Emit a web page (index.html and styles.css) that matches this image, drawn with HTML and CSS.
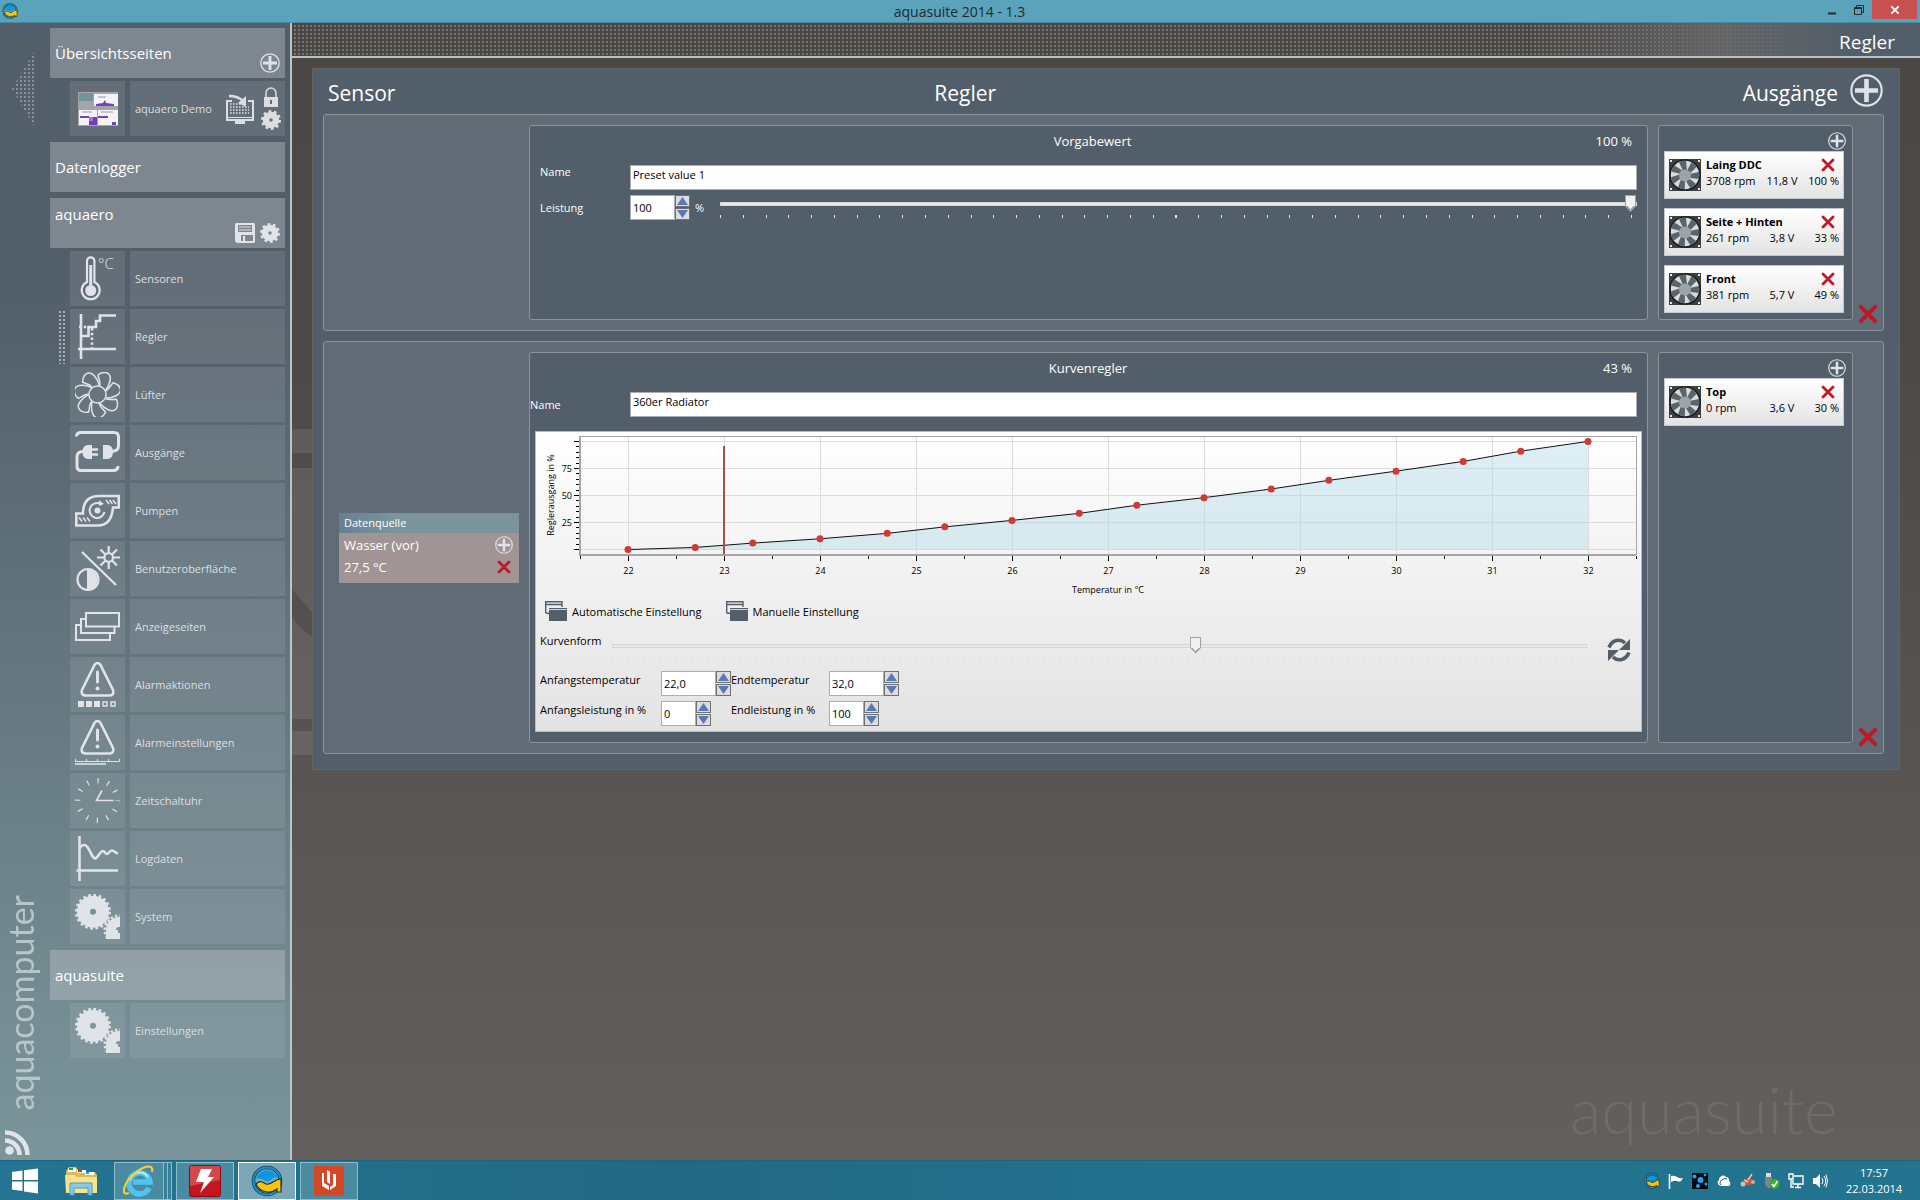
FILE: index.html
```
<!DOCTYPE html>
<html lang="de">
<head>
  <meta charset="UTF-8">
  <meta name="viewport" content="width=device-width, initial-scale=1.0">
  <title>aquasuite 2014 - 1.3</title>
  <link rel="stylesheet" href="styles.css">
</head>
<body>

  <!-- Shared icons -->
  <svg class="sprite" aria-hidden="true">
    <symbol id="i-plus" viewBox="0 0 20 20">
      <circle cx="10" cy="10" r="9.2" fill="none" stroke="currentColor" stroke-width="1.3"/>
      <path d="M10 3v14M3 10h14" stroke="currentColor" stroke-width="2.8"/>
    </symbol>
    <symbol id="i-cross" viewBox="0 0 14 14">
      <path d="M2 2l10 10M12 2L2 12" stroke="#c01828" stroke-width="2.8" stroke-linecap="round"/>
    </symbol>
    <symbol id="i-gear" viewBox="0 0 20 20">
      <circle cx="10" cy="10" r="5" fill="none" stroke="currentColor" stroke-width="6.4"/>
      <circle cx="10" cy="10" r="8.6" fill="none" stroke="currentColor" stroke-width="2.8" stroke-dasharray="2.7 2.7"/>
    </symbol>
    <symbol id="i-save" viewBox="0 0 20 20">
      <path fill="currentColor" fill-rule="evenodd" d="M1 0h18l1 1v18l-1 1H2l-2-2V1zM3 2v7h14V2zM6 12v6h12v-6z"/>
      <path d="M4 4h12M4 7h12" stroke="currentColor"/>
      <rect x="8" y="13" width="2" height="5" fill="currentColor"/>
    </symbol>
    <symbol id="i-lock" viewBox="0 0 14 20">
      <path d="M2 11V6a5 5 0 0 1 10 0v5" fill="none" stroke="currentColor" stroke-width="1.5"/>
      <path fill="currentColor" fill-rule="evenodd" d="M0 10h14v10H0zM6 13v4h2v-4z"/>
    </symbol>
    <symbol id="i-desktop" viewBox="0 0 28 30">
      <path d="M6 7H1v19h26V7h-5" fill="none" stroke="currentColor" stroke-width="2"/>
      <path d="M4 10h15M4 13h19M4 16h19M4 19h19" stroke="currentColor" stroke-width="1.6" stroke-dasharray="1.6 1.4"/>
      <path d="M2 23.5h24" stroke="currentColor"/>
      <path d="M9 27h10v3H9z" fill="currentColor"/>
      <path d="M3 2c6 0 10 1 14 5" fill="none" stroke="currentColor" stroke-width="2.4"/>
      <path d="M20 2v11L12 9z" fill="currentColor"/>
    </symbol>
    <symbol id="i-temp" viewBox="0 0 45 45">
      <path d="M12 26V5a3.7 3.7 0 0 1 7.4 0v21a9 9 0 1 1-7.4 0z" fill="none" stroke="currentColor" stroke-width="2.2"/>
      <circle cx="15.7" cy="34.5" r="5.5" fill="currentColor"/>
      <path d="M15.7 9v22" stroke="currentColor" stroke-width="3"/>
    </symbol>
    <symbol id="i-regler" viewBox="0 0 45 45">
      <g fill="none" stroke="currentColor" stroke-width="2.6">
        <path d="M6 0v45M3 35h38M7 22h6.5v-9H21V7h4V1.5h16"/>
        <path d="M4 13h10M17 14v23" stroke-dasharray="2.4 2.4"/>
      </g>
    </symbol>
    <symbol id="i-fan" viewBox="-22.5 -22.5 45 45">
      <g fill="none" stroke="currentColor" stroke-width="1.5">
        <circle r="8.6"/>
        <path id="blade" d="M-5.5-7C-7-10-11-10.5-15-12.5C-15-17-12.500-21-9-21.500C-5-22-.5-17 2-8.600"/>
        <use href="#blade" transform="rotate(51.43)"/>
        <use href="#blade" transform="rotate(102.86)"/>
        <use href="#blade" transform="rotate(154.29)"/>
        <use href="#blade" transform="rotate(205.71)"/>
        <use href="#blade" transform="rotate(257.14)"/>
        <use href="#blade" transform="rotate(308.57)"/>
      </g>
    </symbol>
    <symbol id="i-plug" viewBox="0 0 45 45">
      <g fill="none" stroke="currentColor" stroke-width="3">
        <path d="M1.5 6.5Q1.5 2.5 6 2.5H39Q43.5 2.5 43.5 7V16Q43.5 21 37 21.5"/>
        <path d="M8 21.5Q2 21.5 2 27V36Q2 40.5 6 40.5H38Q43 40.5 43 36"/>
        <path d="M16 19.5h7M16 24.5h7" stroke-width="2.4"/>
      </g>
      <path fill="currentColor" d="M17 15h-4q-5.5 0-5.5 7t5.5 7h4zM28 15h4q6 0 6 7t-6 7h-4z"/>
    </symbol>
    <symbol id="i-pump" viewBox="0 0 45 45">
      <g fill="none" stroke="currentColor">
        <path stroke-width="2.6" d="M43.7 8H24C14 8 8 13 8 25.5H1.3V37.5H23C33 37.5 37 31 38 19.5h5.7z"/>
        <path stroke-width="2" d="M25 15.5a7.5 7.5 0 1 0 4.5 8.5"/>
        <path stroke-width="1.6" d="M31 12l3 4M34.5 12l3 4M38 12l3 4M4 29.5l3 4M8 29.5l3 4M12 29.5l3 4"/>
      </g>
      <circle cx="22.5" cy="22.5" r="3" fill="currentColor"/>
      <path d="M24 12l5 4-5 2z" fill="currentColor"/>
    </symbol>
    <symbol id="i-display" viewBox="0 0 45 45">
      <g fill="none" stroke="currentColor" stroke-width="2.2">
        <path d="M7 6l34 33"/>
        <circle cx="33.7" cy="11.5" r="4.3"/>
        <path d="M33.7 0v7M33.7 16v7M22 11.5h7M38.5 11.5h7M25.5 3.5l5 5M37 14.5l5 5M42 3.5l-5 5M30.5 14.5l-5 5"/>
        <circle cx="13" cy="33.5" r="10.5"/>
      </g>
      <path fill="currentColor" d="M12 23a10.5 10.5 0 0 1 0 21z"/>
    </symbol>
    <symbol id="i-pages" viewBox="0 0 45 45">
      <path fill="none" stroke="currentColor" stroke-width="2" d="M11 9h33v13.5H11zM10 15H6v14h33.5v-6M5 21H1v15h34v-6"/>
    </symbol>
    <symbol id="i-warn" viewBox="0 0 45 45">
      <path fill="none" stroke="currentColor" stroke-width="2.6" d="M19.5 3Q22.5-1 25.5 3L38 28Q39.5 33.5 34 33.5H11Q5.5 33.5 7 28z"/>
      <path stroke="currentColor" stroke-width="3" stroke-linecap="round" d="M22.5 10v10"/>
      <circle cx="22.5" cy="26.5" r="2" fill="currentColor"/>
    </symbol>
    <symbol id="i-clock" viewBox="-22.5 -22.5 45 45">
      <circle r="19.8" fill="none" stroke="currentColor" stroke-width="5.4" stroke-dasharray="1.2 9.167" stroke-dashoffset="0.6"/>
      <path d="M4.5-10L-1 0H16" fill="none" stroke="currentColor" stroke-width="1.6"/>
    </symbol>
    <symbol id="i-log" viewBox="0 0 45 45">
      <g fill="none" stroke="currentColor" stroke-width="2.6">
        <path d="M4.5 0v45M1.5 34.5H43"/>
        <path d="M5 12C7 8 11 8 13 12C16 16 17 22 20 22.5C23 22 25 15 28 15C30 15 30 18 32 18C34 18 34 14.5 37 14.5C39 14.5 40 17 43 17.5"/>
      </g>
    </symbol>
    <symbol id="i-gears" viewBox="0 0 45 45">
      <circle cx="18" cy="17.8" r="9.5" fill="none" stroke="currentColor" stroke-width="13"/>
      <circle cx="18" cy="17.8" r="16.5" fill="none" stroke="currentColor" stroke-width="3" stroke-dasharray="2.592 2.592"/>
      <circle cx="44" cy="36" r="8" fill="none" stroke="currentColor" stroke-width="10"/>
      <circle cx="44" cy="36" r="14" fill="none" stroke="currentColor" stroke-width="3" stroke-dasharray="2.2 2.2"/>
      <path d="M31 36h12v9H31z" fill="currentColor"/>
    </symbol>
    <symbol id="i-rss" viewBox="0 0 25 25">
      <circle cx="4.5" cy="20.5" r="4.3" fill="currentColor"/>
      <path d="M0 10.5A14.5 14.5 0 0 1 14.5 25M0 2.5A22.5 22.5 0 0 1 22.5 25" fill="none" stroke="currentColor" stroke-width="4.6"/>
    </symbol>
    <symbol id="i-windows" viewBox="0 0 22 20">
      <path d="M.7 12V.7H17V6M.7 12.3H4M.7 3.5H17" fill="none" stroke="#525e69" stroke-width="1.4"/>
      <path d="M4 7h18v13H4z" fill="#525e69"/>
      <path d="M4 8.5h18" stroke="#cfd3d6"/>
    </symbol>
    <symbol id="i-refresh" viewBox="0 0 24 24">
      <path d="M2 9.5C5 2 13 0 18 5M22 14.5C19 22 11 24 6 19" fill="none" stroke="#525e69" stroke-width="3.6"/>
      <path fill="#525e69" d="M23 1v11H12zM1 23V12h11z"/>
    </symbol>
    <symbol id="i-case-fan" viewBox="0 0 32 32">
      <path d="M0 0h32v32H0z" fill="#3d3f40"/>
      <circle cx="16" cy="16" r="15" fill="#d9dcdc" stroke="#1c1d1e" stroke-width="1.6"/>
      <g fill="#59656a">
        <path id="vane" d="M14 12L10 3q4-2 7-1l1 10z"/>
        <use href="#vane" transform="rotate(51.43 16 16)"/>
        <use href="#vane" transform="rotate(102.86 16 16)"/>
        <use href="#vane" transform="rotate(154.29 16 16)"/>
        <use href="#vane" transform="rotate(205.71 16 16)"/>
        <use href="#vane" transform="rotate(257.14 16 16)"/>
        <use href="#vane" transform="rotate(308.57 16 16)"/>
      </g>
      <circle cx="16" cy="16.5" r="6" fill="#9ba5a9"/>
      <path d="M1 1h2v2H1zM29 1h2v2h-2zM1 29h2v2H1zM29 29h2v2h-2z" fill="#e8e8e8"/>
    </symbol>
    <symbol id="i-aqua" viewBox="0 0 32 32">
      <circle cx="16" cy="16" r="13.5" fill="none" stroke="#1c4450" stroke-width="3.6"/>
      <circle cx="16" cy="16" r="13.5" fill="none" stroke="#1a94d8" stroke-width="1.8"/>
      <path d="M5 14A11.5 11.5 0 0 1 27 13C24 11 21 14 18 16C14 17 11 12 5 14z" fill="#0a97e4"/>
      <path d="M5 19C9 15 12 17 15 19C20 21 23 14 30 14V27H26V24C20 29 9 28 5 19z" fill="#ffc400" stroke="#1c3238" stroke-width="1.2"/>
    </symbol>
  </svg>

  <!-- Window title bar -->
  <header class="titlebar">
    <svg class="titlebar-logo"><use href="#i-aqua"/></svg>
    <h1>aquasuite 2014 - 1.3</h1>
    <div class="window-buttons">
      <button type="button" aria-label="Minimieren">
        <svg width="8" height="12" viewBox="0 0 8 12"><path d="M0 9.5h8" stroke="#2a2a2a" stroke-width="2"/></svg>
      </button>
      <button type="button" aria-label="Wiederherstellen">
        <svg width="10" height="10" viewBox="0 0 10 10"><path d="M.5 2.5h7v7h-7zM.5 3.5h7M2.5 2.5v-2h7v7h-2" fill="none" stroke="#2a2a2a"/></svg>
      </button>
      <button type="button" class="close" aria-label="Schließen">
        <svg width="8" height="8" viewBox="0 0 8 8"><path d="M0 0l8 8M8 0L0 8" stroke="#fff" stroke-width="1.8"/></svg>
      </button>
    </div>
  </header>

  <div class="app">
    <aside class="sidebar">
      <div class="rail">
        <button type="button" class="collapse" aria-label="Menü einklappen"></button>
        <div class="brand">aquacomputer</div>
        <a href="#" class="rss" aria-label="RSS"><svg><use href="#i-rss"/></svg></a>
      </div>

      <nav class="nav">
        <section>
          <div class="nav-head">
            <h2>Übersichtsseiten</h2>
            <div class="nav-tools">
              <button type="button" aria-label="Seite hinzufügen"><svg><use href="#i-plus"/></svg></button>
            </div>
          </div>
          <div class="nav-item">
            <span class="nav-icon">
              <svg class="thumb" viewBox="0 0 40 34">
                <path d="M0 0h40v34H0z" fill="#a4a5a8"/>
                <path d="M1 1h14v8H1z" fill="#6f9499"/>
                <path d="M16 2h24v12H16zM1 18h18v15H1zM20 18h20v15H20z" fill="#f4f4f8"/>
                <path d="M18 14v-2l7-1 2-3 1 3 8 1v2zM2 24h9v2H2zM20 24h10v2H20zM34 30h4v3h-4z" fill="#7340c0"/>
                <path d="M11 25h8v8h-8z" fill="#6a3dd0"/>
                <path d="M11 25h4v4h-4z" fill="#b070d0"/>
                <path d="M4 20h10M23 20h12M20 5h8" stroke="#999"/>
              </svg>
            </span>
            <div class="nav-label">
              <a href="#">aquaero Demo</a>
              <button type="button" class="desktop" aria-label="Auf Desktop anzeigen"><svg><use href="#i-desktop"/></svg></button>
              <div class="nav-stack">
                <button type="button" aria-label="Sperren"><svg class="lock"><use href="#i-lock"/></svg></button>
                <button type="button" aria-label="Einstellungen"><svg><use href="#i-gear"/></svg></button>
              </div>
            </div>
          </div>
        </section>

        <section>
          <div class="nav-head"><h2>Datenlogger</h2></div>
        </section>

        <section>
          <div class="nav-head top">
            <h2>aquaero</h2>
            <div class="nav-tools">
              <button type="button" aria-label="Speichern"><svg><use href="#i-save"/></svg></button>
              <button type="button" aria-label="Einstellungen"><svg><use href="#i-gear"/></svg></button>
            </div>
          </div>
          <a href="#" class="nav-item"><span class="nav-icon"><svg viewBox="0 0 45 45" class="temp">
            <use href="#i-temp"/>
            <text x="23" y="13" class="degree">°C</text>
          </svg></span><span class="nav-label">Sensoren</span></a>
          <a href="#" class="nav-item active"><span class="nav-icon"><svg><use href="#i-regler"/></svg></span><span class="nav-label">Regler</span></a>
          <a href="#" class="nav-item"><span class="nav-icon"><svg><use href="#i-fan"/></svg></span><span class="nav-label">Lüfter</span></a>
          <a href="#" class="nav-item"><span class="nav-icon"><svg><use href="#i-plug"/></svg></span><span class="nav-label">Ausgänge</span></a>
          <a href="#" class="nav-item"><span class="nav-icon"><svg><use href="#i-pump"/></svg></span><span class="nav-label">Pumpen</span></a>
          <a href="#" class="nav-item"><span class="nav-icon"><svg><use href="#i-display"/></svg></span><span class="nav-label">Benutzeroberfläche</span></a>
          <a href="#" class="nav-item"><span class="nav-icon"><svg><use href="#i-pages"/></svg></span><span class="nav-label">Anzeigeseiten</span></a>
          <a href="#" class="nav-item"><span class="nav-icon"><svg viewBox="0 0 45 45">
            <use href="#i-warn"/>
            <path d="M3 39h6v6H3zM11 39h6v6h-6zM19 39h6v6h-6z" fill="currentColor"/>
            <path d="M28 40h4v4h-4zM36 40h4v4h-4z" fill="none" stroke="currentColor" stroke-width="1.4"/>
          </svg></span><span class="nav-label">Alarmaktionen</span></a>
          <a href="#" class="nav-item"><span class="nav-icon"><svg viewBox="0 0 45 45">
            <use href="#i-warn"/>
            <path d="M.5 39v2.5h44V39M11.5 39v2M22.5 39v2M33.5 39v2" fill="none" stroke="currentColor"/>
            <path d="M0 44h31" stroke="currentColor" stroke-width="1.6"/>
          </svg></span><span class="nav-label">Alarmeinstellungen</span></a>
          <a href="#" class="nav-item"><span class="nav-icon"><svg><use href="#i-clock"/></svg></span><span class="nav-label">Zeitschaltuhr</span></a>
          <a href="#" class="nav-item"><span class="nav-icon"><svg><use href="#i-log"/></svg></span><span class="nav-label">Logdaten</span></a>
          <a href="#" class="nav-item"><span class="nav-icon"><svg><use href="#i-gears"/></svg></span><span class="nav-label">System</span></a>
        </section>

        <section>
          <div class="nav-head"><h2>aquasuite</h2></div>
          <a href="#" class="nav-item"><span class="nav-icon"><svg><use href="#i-gears"/></svg></span><span class="nav-label">Einstellungen</span></a>
        </section>
      </nav>
    </aside>

    <main class="content">
      <div class="page-head"><h2>Regler</h2></div>

      <svg class="backdrop" viewBox="0 0 20 330" aria-hidden="true">
        <path d="M0 0h20v24H0zM0 39h20v144L0 160zM0 188q8 12 20 20v82H0zM0 302h20v24H0z" fill="#fff" opacity=".09"/>
      </svg>

      <div class="panel">
        <div class="panel-head">
          <h3>Sensor</h3>
          <h3>Regler</h3>
          <div class="panel-add">
            <h3>Ausgänge</h3>
            <button type="button" aria-label="Regler hinzufügen"><svg><use href="#i-plus"/></svg></button>
          </div>
        </div>

        <!-- Preset value -->
        <section class="controller">
          <div class="source-cell"></div>
          <div class="box preset">
            <div class="box-head"><h4>Vorgabewert</h4><output>100 %</output></div>
            <div class="form-row name-row">
              <label for="presetName">Name</label>
              <input type="text" id="presetName" class="name-input" value="Preset value 1">
            </div>
            <div class="form-row">
              <label for="presetPower">Leistung</label>
              <div class="spinner">
                <input type="text" id="presetPower" class="short" value="100">
                <div class="spin-buttons"><button type="button" class="up" aria-label="Mehr"></button><button type="button" class="down" aria-label="Weniger"></button></div>
              </div>
              <span class="unit">%</span>
              <div class="slider">
                <input type="range" min="0" max="100" value="100" aria-label="Leistung">
                <div class="ticks"></div>
              </div>
            </div>
          </div>
          <div class="box outputs">
            <button type="button" class="add" aria-label="Ausgang hinzufügen"><svg><use href="#i-plus"/></svg></button>
            <div class="output">
              <svg class="fan"><use href="#i-case-fan"/></svg>
              <div class="output-info">
                <b>Laing DDC</b>
                <button type="button" aria-label="Laing DDC entfernen"><svg><use href="#i-cross"/></svg></button>
                <div class="values"><span>3708 rpm</span><span>11,8 V</span><span>100 %</span></div>
              </div>
            </div>
            <div class="output">
              <svg class="fan"><use href="#i-case-fan"/></svg>
              <div class="output-info">
                <b>Seite + Hinten</b>
                <button type="button" aria-label="Seite + Hinten entfernen"><svg><use href="#i-cross"/></svg></button>
                <div class="values"><span>261 rpm</span><span>3,8 V</span><span>33 %</span></div>
              </div>
            </div>
            <div class="output">
              <svg class="fan"><use href="#i-case-fan"/></svg>
              <div class="output-info">
                <b>Front</b>
                <button type="button" aria-label="Front entfernen"><svg><use href="#i-cross"/></svg></button>
                <div class="values"><span>381 rpm</span><span>5,7 V</span><span>49 %</span></div>
              </div>
            </div>
          </div>
          <button type="button" class="remove" aria-label="Regler entfernen"><svg><use href="#i-cross"/></svg></button>
        </section>

        <!-- Curve controller -->
        <section class="controller">
          <div class="source-cell">
            <div class="source">
              <div class="source-head">Datenquelle</div>
              <div class="source-row"><span>Wasser (vor)</span>
                <button type="button" aria-label="Datenquelle wählen"><svg><use href="#i-plus"/></svg></button></div>
              <div class="source-row"><span>27,5 °C</span>
                <button type="button" class="small" aria-label="Datenquelle entfernen"><svg><use href="#i-cross"/></svg></button></div>
            </div>
          </div>
          <div class="box curve">
            <div class="box-head"><h4>Kurvenregler</h4><output>43 %</output></div>
            <div class="form-row">
              <label for="curveName">Name</label>
              <input type="text" id="curveName" class="name-input" value="360er Radiator">
            </div>

            <div class="card">
              <svg class="chart" id="curveChart" role="img" aria-label="Reglerausgang über Temperatur"></svg>
              <div class="card-actions">
                <button type="button"><svg><use href="#i-windows"/></svg>Automatische Einstellung</button>
                <button type="button"><svg><use href="#i-windows"/></svg>Manuelle Einstellung</button>
              </div>
              <div class="shape-row">
                <label for="curveShape">Kurvenform</label>
                <div class="slider light">
                  <input type="range" id="curveShape" min="0" max="100" value="60">
                  <div class="ticks"></div>
                </div>
                <button type="button" class="refresh" aria-label="Zurücksetzen"><svg><use href="#i-refresh"/></svg></button>
              </div>
              <div class="fields">
                <label for="tStart">Anfangstemperatur</label>
                <div class="spinner">
                  <input type="text" id="tStart" value="22,0">
                  <div class="spin-buttons"><button type="button" class="up" aria-label="Mehr"></button><button type="button" class="down" aria-label="Weniger"></button></div>
                </div>
                <label for="tEnd">Endtemperatur</label>
                <div class="spinner">
                  <input type="text" id="tEnd" value="32,0">
                  <div class="spin-buttons"><button type="button" class="up" aria-label="Mehr"></button><button type="button" class="down" aria-label="Weniger"></button></div>
                </div>
                <label for="pStart">Anfangsleistung in %</label>
                <div class="spinner">
                  <input type="text" id="pStart" class="tiny" value="0">
                  <div class="spin-buttons"><button type="button" class="up" aria-label="Mehr"></button><button type="button" class="down" aria-label="Weniger"></button></div>
                </div>
                <label for="pEnd">Endleistung in %</label>
                <div class="spinner">
                  <input type="text" id="pEnd" class="tiny" value="100">
                  <div class="spin-buttons"><button type="button" class="up" aria-label="Mehr"></button><button type="button" class="down" aria-label="Weniger"></button></div>
                </div>
              </div>
            </div>
          </div>
          <div class="box outputs">
            <button type="button" class="add" aria-label="Ausgang hinzufügen"><svg><use href="#i-plus"/></svg></button>
            <div class="output">
              <svg class="fan"><use href="#i-case-fan"/></svg>
              <div class="output-info">
                <b>Top</b>
                <button type="button" aria-label="Top entfernen"><svg><use href="#i-cross"/></svg></button>
                <div class="values"><span>0 rpm</span><span>3,6 V</span><span>30 %</span></div>
              </div>
            </div>
          </div>
          <button type="button" class="remove" aria-label="Regler entfernen"><svg><use href="#i-cross"/></svg></button>
        </section>
      </div>

      <div class="watermark">aquasuite</div>
    </main>
  </div>

  <!-- Windows taskbar -->
  <footer class="taskbar">
    <button type="button" class="start" aria-label="Start">
      <svg width="28" height="26" viewBox="0 0 28 26"><path d="M1 4l10.5-1.5V12H1zM13 2.3L27 .5V12H13zM1 13.5h10.5V23L1 21.5zM13 13.5h14V25.5L13 23.5z" fill="#fff"/></svg>
    </button>
    <button type="button" class="plain" aria-label="Explorer">
      <svg width="32" height="30" viewBox="0 0 32 30">
        <path d="M1 5l3-4h7l2 3h6l2 2h9l2 3v17H1z" fill="#d9bb57"/>
        <path d="M3 2h8v4H3zM12 4h9v3h-9zM20 6h9v3h-9z" fill="#fff"/>
        <path d="M4 2h4v2H4z" fill="#19a82e"/><path d="M13 4h4v2h-4z" fill="#d0391e"/><path d="M21 6h3v2h-3z" fill="#2aa0de"/>
        <path d="M0 9h10l1 2h21v16H1z" fill="#f6e38c"/>
        <path d="M5 29V17h22v12h-4v-7H9v7z" fill="#8cc7e6" stroke="#4b9cc6"/>
      </svg>
    </button>
    <div class="stacked">
      <button type="button" class="task ie" aria-label="Internet Explorer">
        <svg width="32" height="32" viewBox="0 0 32 32">
          <path d="M26 23A10.5 10.5 0 1 1 27 17H10" fill="none" stroke="#4fc3f2" stroke-width="5.5"/>
          <path d="M7 15A10 10 0 0 1 25 12" fill="none" stroke="#b9ecff" stroke-width="2"/>
          <path d="M6 28C-4 32 2 16 11 9C20 1 31-2 29 7" fill="none" stroke="#f5cf2a" stroke-width="2.2"/>
        </svg>
      </button>
      <i></i><i></i>
    </div>
    <button type="button" class="task" aria-label="Flash">
      <svg width="32" height="32" viewBox="0 0 32 32">
        <rect x=".5" y=".5" width="31" height="31" rx="2" fill="#c4161c" stroke="#8a0d10"/>
        <path d="M1 1h30v14L1 21z" fill="#fff" opacity=".22"/>
        <path d="M12 4h11l-4 8h6L11 28l4-11H7z" fill="#fff"/>
      </svg>
    </button>
    <button type="button" class="task current" aria-label="aquasuite"><svg width="32" height="32"><use href="#i-aqua"/></svg></button>
    <button type="button" class="task" aria-label="Reader">
      <svg width="30" height="30" viewBox="0 0 30 30">
        <path d="M0 0h30v30H0z" fill="#d24726"/>
        <path d="M8 7h2v10l5 3v4l-7-4zM22 8h-3v11l-3 2v3l6-4zM13 4l3 2v12l-3-2z" fill="#fff"/>
      </svg>
    </button>
    <div class="tray">
      <svg viewBox="0 0 32 32"><use href="#i-aqua"/></svg>
      <svg viewBox="0 0 16 16"><path d="M1.5 1v15" stroke="#fff" stroke-width="1.6"/><path d="M3 3q3-1 6 1t6 1q-1 2-2 3-2 1-4 0T3 9z" fill="#fff"/></svg>
      <svg viewBox="0 0 16 16"><path d="M0 0h16v16H0z" fill="#05090d"/><g fill="#27a3ee"><circle cx="8.5" cy="7" r="3"/><circle cx="2.5" cy="3.5" r="2"/><circle cx="13" cy="2" r="1.4"/><circle cx="6" cy="13" r="2"/><circle cx="14" cy="11" r="1.5"/></g></svg>
      <svg viewBox="0 0 16 16"><path d="M3 12a3 3 0 0 1 0-5 4 4 0 0 1 7-3A3.5 3.5 0 0 1 13 8a3 3 0 0 1 0 5H6a3 3 0 0 1-3-1z" fill="#fff"/><path d="M5 12a3 3 0 0 1 1-5 4 4 0 0 1 5-1" fill="none" stroke="#24586b"/></svg>
      <svg viewBox="0 0 16 16"><path d="M4 10l3-5h4l2 4-4 4z" fill="#e04a36"/><circle cx="3" cy="11" r="2.5" fill="#c8c2c0"/><circle cx="13" cy="9" r="2" fill="#b9b4b2"/><path d="M8 7l4-6M4 7l4 2" stroke="#d8d0cc" stroke-width="1.4"/></svg>
      <svg viewBox="0 0 16 16"><path d="M2 0h5v4H2z" fill="#ddd"/><path d="M1 4h7v8l-3 4-4-4z" fill="#7d8488"/><circle cx="10.5" cy="11" r="5" fill="#3fae2a"/><path d="M8 11l2 2.5L13.5 8" fill="none" stroke="#fff" stroke-width="1.6"/></svg>
      <svg viewBox="0 0 16 16"><path d="M6 3h9v8H5V7M10 11v3M7 14.5h6M1 1h4v5H1zM3 6v8h3" fill="none" stroke="#fff" stroke-width="1.4"/></svg>
      <svg viewBox="0 0 16 16"><path d="M1 5h3l4-4v14l-4-4H1z" fill="#fff"/><path d="M10 5q2 3 0 6M12 3q3.5 5 0 10M14 1.5q3 6.5 0 13" fill="none" stroke="#fff"/></svg>
    </div>
    <div class="clock"><time>17:57</time><time>22.03.2014</time></div>
  </footer>

  <script src="chart.js"></script>
</body>
</html>
```
FILE: styles.css
```
* {
  box-sizing: border-box;
}
body {
  display: flex;
  flex-direction: column;
  min-height: 100vh;
  margin: 0;
  font-family: "Open Sans", "Noto Sans", sans-serif;
  font-size: 11px;
  color: #ffffff;
  background-color: #4d4947;
}
h1, h2, h3, h4 {
  margin: 0;
  font-weight: normal;
}
a {
  color: inherit;
  text-decoration: none;
}
button {
  display: block;
  padding: 0;
  border: none;
  background: none;
  color: inherit;
  font: inherit;
  cursor: pointer;
}
svg {
  display: block;
}
.sprite {
  display: none;
}

/* Title bar */
.titlebar {
  display: grid;
  grid-template-columns: 1fr auto 1fr;
  height: 23px;
  padding: 0 3px 0 2px;
  background-color: #5ba3bb;
  border-bottom: 1px solid #4689a0;
  color: #1c2b30;
}
.titlebar-logo {
  width: 16px;
  height: 16px;
  margin-top: 3px;
}
.titlebar h1 {
  font-size: 14px;
  line-height: 24px;
}
.window-buttons {
  display: flex;
  justify-content: flex-end;
}
.window-buttons button {
  display: flex;
  justify-content: center;
  align-items: center;
  width: 27px;
  height: 19px;
}
.window-buttons .close {
  width: 45px;
  background-color: #c75050;
}

.app {
  flex: 1;
  display: flex;
}

/* Sidebar */
.sidebar {
  display: flex;
  padding-right: 5px;
  border-right: 2px solid #b9c5c8;
  background: linear-gradient(#525e69 0%, #525e69 22%, #7b959b 100%);
}
.rail {
  display: flex;
  flex-direction: column;
  align-items: center;
  width: 50px;
}
.collapse {
  width: 22px;
  height: 74px;
  margin-top: 29px;
  margin-right: 4px;
  background-image: conic-gradient(at 2px 2px, transparent 270deg, #88919a 0);
  background-size: 4px 4px;
  clip-path: polygon(100% 0, 100% 100%, 0 50%);
}
.brand {
  margin-top: auto;
  margin-right: 8px;
  writing-mode: vertical-rl;
  transform: rotate(180deg);
  font-family: Lato, "Open Sans", sans-serif;
  font-size: 34px;
  line-height: 40px;
  color: #b9c6c9;
}
.rss {
  align-self: flex-start;
  margin: 20px 0 5px 5px;
  color: #e0e3e8;
}
.rss svg {
  width: 25px;
  height: 25px;
}
.nav {
  width: 235px;
  padding-top: 5px;
}
.nav section {
  margin-bottom: 6px;
}
.nav-head {
  position: relative;
  display: flex;
  align-items: center;
  height: 50px;
  padding: 0 5px;
  background-color: rgba(200, 199, 205, 0.38);
}
.nav-head.top {
  align-items: flex-start;
  padding-top: 6px;
}
.nav-head h2 {
  font-size: 15px;
  line-height: 20px;
}
.nav-tools {
  position: absolute;
  right: 5px;
  bottom: 5px;
  display: flex;
  gap: 5px;
  color: #e0e3e8;
}
.nav-tools svg, .nav-stack svg {
  width: 20px;
  height: 20px;
}
.nav-item {
  position: relative;
  display: flex;
  gap: 5px;
  height: 55px;
  margin-top: 3px;
  padding-left: 20px;
  color: #dcdfe2;
}
.nav-item.active::before {
  content: "";
  position: absolute;
  left: 9px;
  top: 2px;
  width: 6px;
  height: 53px;
  background-image: conic-gradient(at 2px 2px, transparent 270deg, #a9b1b8 0);
  background-size: 4px 4px;
}
.nav-icon, .nav-label {
  display: flex;
  align-items: center;
  background-color: rgba(200, 199, 205, 0.15);
}
.nav-icon {
  justify-content: center;
  width: 55px;
  color: #e0e3e8;
}
.nav-icon svg {
  width: 45px;
  height: 45px;
}
.nav-icon .thumb {
  width: 40px;
  height: 34px;
}
.nav-icon .temp {
  overflow: visible;
}
.degree {
  font-size: 15px;
  font-weight: 300;
  fill: currentColor;
}
.nav-label {
  flex: 1;
  padding: 0 4px 0 5px;
}
.nav-label .desktop {
  margin-left: auto;
}
.desktop svg {
  width: 28px;
  height: 30px;
}
.nav-stack {
  display: flex;
  flex-direction: column;
  align-items: center;
  gap: 3px;
  margin-left: 7px;
}
.nav-stack .lock {
  width: 14px;
}

/* Main area */
.content {
  position: relative;
  flex: 1;
  background: linear-gradient(#4b4744 0%, #4d4947 30%, #635f5d 100%);
}
.page-head {
  position: relative;
  height: 35px;
  border-bottom: 2px solid #b9c5c8;
  background: linear-gradient(90deg, transparent 76%, #626466 88%, #525e69 96%);
}
.page-head::before {
  content: "";
  position: absolute;
  inset: 2px 0 0 2px;
  background-image: conic-gradient(at 2px 2px, transparent 270deg, #777574 0);
  background-size: 4px 4px;
  -webkit-mask-image: linear-gradient(90deg, #000 80%, transparent 95%);
  mask-image: linear-gradient(90deg, #000 80%, transparent 95%);
}
.page-head h2 {
  padding: 6px 25px 0 0;
  text-align: right;
  font-size: 19px;
  line-height: 26px;
}
.backdrop {
  position: absolute;
  left: 0;
  top: 406px;
  width: 20px;
  height: 330px;
}
.panel {
  position: relative;
  margin: 10px 20px 0;
  padding: 0 15px 15px 10px;
  border: 1px solid #666462;
  background-color: #525e69;
}
.panel-head {
  display: grid;
  grid-template-columns: 3fr 4fr auto;
  align-items: center;
  height: 45px;
  padding-left: 5px;
}
.panel-head h3 {
  padding-top: 2px;
  font-size: 21px;
  line-height: 28px;
}
.panel-add {
  display: flex;
  align-items: center;
  gap: 12px;
}
.panel-add svg {
  width: 33px;
  height: 33px;
  margin: 0 1px 2px 0;
  color: #dfe3e8;
}
.controller {
  display: flex;
  padding: 10px 5px 10px 0;
  border: 1px solid #8b949b;
  border-radius: 3px;
  background-color: #616b75;
}
.controller + .controller {
  margin-top: 10px;
}
.source-cell {
  display: flex;
  align-items: center;
  width: 205px;
  padding: 0 10px 0 15px;
}
.box {
  min-height: 195px;
  border: 1px solid #8b949b;
  border-radius: 3px;
  background-color: #525e69;
}

/* Data source */
.source {
  flex: 1;
  height: 70px;
  background-color: #a09594;
}
.source-head {
  padding: 0 5px;
  line-height: 20px;
  background: linear-gradient(90deg, #667f95, #7a949a 30%);
}
.source-row {
  display: flex;
  justify-content: space-between;
  align-items: center;
  height: 22px;
  padding: 2px 6px 0 5px;
  font-size: 13px;
}
.source-row svg {
  width: 18px;
  height: 18px;
  color: #dfe3e8;
}
.source-row .small svg {
  width: 14px;
  height: 14px;
  margin-right: 2px;
}

/* Controller settings */
.preset, .curve {
  flex: 1;
}
.preset {
  padding: 5px 10px 0;
}
.curve {
  padding: 5px 5px 10px 0;
}
.box-head {
  position: relative;
  margin-bottom: 14px;
  padding-left: 8px;
  text-align: center;
  font-size: 13px;
  line-height: 20px;
}
.curve .box-head {
  padding-left: 4px;
}
.box-head h4 {
  font-size: 13px;
}
.box-head output {
  position: absolute;
  right: 5px;
  top: 0;
}
.curve .box-head output {
  right: 10px;
}
.form-row {
  display: flex;
  align-items: center;
  margin-bottom: 5px;
}
.form-row label {
  width: 90px;
  line-height: 14px;
}
.curve .form-row label {
  width: 100px;
}
.curve .form-row {
  margin-bottom: 14px;
  padding-right: 5px;
}
.name-row label {
  align-self: flex-start;
}
input[type="text"] {
  height: 25px;
  padding: 0 2px;
  border: 1px solid #abadb3;
  border-radius: 0;
  background-color: #ffffff;
  font: inherit;
  color: #000000;
}
input.name-input {
  flex: 1;
  padding-bottom: 6px;
}
.spinner {
  display: flex;
}
.spinner input {
  width: 55px;
}
.spinner .short {
  width: 45px;
}
.spinner .tiny {
  width: 35px;
}
.spin-buttons {
  display: flex;
  flex-direction: column;
  gap: 1px;
}
.spin-buttons button {
  display: flex;
  justify-content: center;
  align-items: center;
  width: 15px;
  height: 12px;
  border: 1px solid #707070;
  background-color: #dddddd;
}
.spin-buttons button::before {
  content: "";
  width: 11px;
  height: 8px;
  background-color: #5878b6;
  clip-path: polygon(50% 0, 100% 100%, 0 100%);
}
.spin-buttons .down::before {
  transform: rotate(180deg);
}
.unit {
  width: 30px;
  padding-left: 5px;
}
.slider {
  flex: 1;
  height: 25px;
}
.slider input {
  display: block;
  width: 100%;
  height: 17px;
  margin: 0;
  appearance: none;
  background: none;
}
.slider input::-webkit-slider-runnable-track {
  height: 4px;
  border: 1px solid #d6d9da;
  background-color: #e7eaea;
}
/* Pentagon thumb, the two gradients outline its tip */
.slider input::-webkit-slider-thumb {
  appearance: none;
  width: 11px;
  height: 17px;
  margin-top: -8px;
  border: solid #9da1a3;
  border-width: 1px 1px 0;
  background:
    linear-gradient(45deg, #9da1a3 66%, transparent 67%) left bottom / 5px 6px no-repeat,
    linear-gradient(315deg, #9da1a3 66%, transparent 67%) right bottom / 5px 6px no-repeat,
    #f0f0f0;
  clip-path: polygon(0 0, 100% 0, 100% 66%, 50% 100%, 0 66%);
}
.slider .ticks {
  height: 3px;
  margin: 3px 5px 0 0;
  border-right: 1px solid #e3e6e8;
  background: repeating-linear-gradient(90deg, #e3e6e8 0 1px, transparent 1px 2.5%);
}
.slider.light input::-webkit-slider-runnable-track {
  border-color: #d2d6d6;
}
.slider.light .ticks {
  margin-right: 0;
  border-color: #dcdfdf;
  background: repeating-linear-gradient(90deg, #dcdfdf 0 1px, transparent 1px 16px);
}

/* Curve card */
.card {
  margin-left: 5px;
  height: 301px;
  border: 1px solid #b4bcc0;
  background: linear-gradient(#ffffff, #e3e3e3);
  color: #000000;
}
.chart {
  width: 100%;
  height: 166px;
  font-size: 9px;
}
.chart .grid {
  stroke: #dcdcdc;
}
.chart .frame {
  stroke: #a5a5a5;
}
.chart .axis {
  stroke: #a5a5a5;
  stroke-width: 2;
}
.chart .tick {
  stroke: #000000;
}
.chart .area {
  fill: #add8e6;
  fill-opacity: 0.4;
}
.chart .line {
  fill: none;
  stroke: #111111;
}
.chart .marker {
  stroke: #a94c4c;
  stroke-width: 2;
}
.chart circle {
  fill: #cf3a36;
}
.card-actions {
  display: flex;
  gap: 24px;
  margin: 3px 0 13px;
  padding-left: 9px;
}
.card-actions button {
  display: flex;
  align-items: center;
  gap: 5px;
  height: 20px;
}
.card-actions svg {
  width: 22px;
  height: 20px;
}
.shape-row {
  display: flex;
  margin-bottom: 9px;
  padding: 0 10px 0 4px;
}
.shape-row label {
  width: 72px;
  line-height: 14px;
}
.shape-row .slider {
  margin-top: 3px;
}
.refresh {
  margin: 4px 0 0 20px;
}
.refresh svg {
  width: 24px;
  height: 24px;
}
.fields {
  display: grid;
  grid-template-columns: 121px 70px 98px auto;
  justify-content: start;
  row-gap: 5px;
  padding-left: 4px;
}
.fields label {
  line-height: 18px;
}

/* Outputs */
.outputs {
  display: flex;
  flex-direction: column;
  gap: 9px;
  width: 195px;
  margin-left: 10px;
  padding: 6px 8px 5px 5px;
}
.outputs .add {
  align-self: flex-end;
  margin: 0 -2px -8px 0;
  color: #dfe3e8;
}
.outputs .add svg {
  width: 18px;
  height: 18px;
}
.output {
  display: flex;
  gap: 5px;
  height: 48px;
  padding: 7px 4px 0;
  border: 1px solid #c3c9cc;
  background: linear-gradient(#ffffff, #e3e3e3);
  color: #000000;
}
.fan {
  width: 32px;
  height: 32px;
}
.output-info {
  flex: 1;
  display: grid;
  grid-template-columns: 1fr auto;
  align-content: start;
  margin-top: -2px;
  line-height: 16px;
}
.output-info button {
  margin: -1px 4px 0 0;
}
.output-info svg {
  width: 14px;
  height: 14px;
}
.values {
  grid-column: 1 / 3;
  display: grid;
  grid-template-columns: 58px 36px 1fr;
  white-space: nowrap;
}
.values span:nth-child(2) {
  text-align: center;
}
.values span:nth-child(3) {
  text-align: right;
}
.remove {
  align-self: flex-end;
  margin-left: 5px;
  margin-bottom: -4px;
}
.remove svg {
  width: 20px;
  height: 20px;
}
.watermark {
  position: absolute;
  right: 82px;
  bottom: 12px;
  font-family: Lato, "Open Sans", sans-serif;
  font-size: 65px;
  font-weight: 300;
  line-height: 78px;
  color: #6e6b69;
}

/* Taskbar */
.taskbar {
  display: flex;
  align-items: center;
  height: 40px;
  border-top: 1px solid #1c6480;
  background: linear-gradient(90deg, #237592, #226883 35%, #22718e 60%, #23748f);
}
.start {
  margin-left: 11px;
}
.plain {
  margin: 0 17px 0 26px;
}
.task {
  display: flex;
  justify-content: center;
  align-items: center;
  width: 58px;
  height: 38px;
  margin-right: 4px;
  border: 1px solid #8fbccb;
  background-color: #4a8ba2;
}
.task.current {
  border-color: #ffffff;
  background-color: #7ba8b8;
}
.stacked {
  display: flex;
  margin-right: 4px;
}
.stacked .task {
  width: 50px;
  margin-right: 0;
}
.stacked i {
  width: 4px;
  border: 1px solid #8fbccb;
  border-left: none;
  background-color: #3a7f98;
}
.tray {
  display: flex;
  gap: 8px;
  margin-left: auto;
}
.tray svg {
  width: 16px;
  height: 16px;
}
.clock {
  display: flex;
  flex-direction: column;
  align-items: center;
  width: 92px;
  font-size: 11px;
  line-height: 16px;
}
```
FILE: chart.js
```
const points = [
  [22, 0], [22.7, 2], [23.3, 6], [24, 10], [24.7, 15], [25.3, 21], [26, 27], [26.7, 33.5],
  [27.3, 41], [28, 48], [28.7, 56], [29.3, 64], [30, 72.5], [30.7, 81.5], [31.3, 91], [32, 100]
];
const currentTemp = 23;
const chart = document.getElementById("curveChart");

const drawChart = () => {
  const left = 44, top = 4, bottom = 123;
  const right = chart.clientWidth - 5;
  // Axis ranges: 21.5 to 32.5 °C, -5 to 105 %
  const px = t => left + (t - 21.5) / 11 * (right - left);
  const py = p => bottom - (p + 5) / 110 * (bottom - top);
  const snap = v => Math.floor(v) + 0.5;
  const line = (cls, x1, y1, x2, y2) =>
    `<line class="${cls}" x1="${x1}" y1="${y1}" x2="${x2}" y2="${y2}"/>`;
  let html = "";

  for (let p = 0; p <= 100; p += 5) {
    const y = snap(py(p));
    const major = p % 25 === 0;
    if (major) html += line("grid", left, y, right, y);
    html += line("tick", left - (major ? 6 : 4), y, left - 1, y);
    if (major && p > 0 && p < 100) {
      html += `<text x="${left - 8}" y="${y + 3}" text-anchor="end">${p}</text>`;
    }
  }
  for (let t = 21.5; t <= 32.5; t += 0.5) {
    const x = snap(px(t));
    const major = Number.isInteger(t);
    if (major) {
      html += line("grid", x, top, x, bottom);
      html += `<text x="${x}" y="${bottom + 19}" text-anchor="middle">${t}</text>`;
    }
    html += line("tick", x, bottom + 1, x, bottom + (major ? 6 : 4));
  }

  const curve = points.map(([t, p]) => `${px(t)},${py(p)}`).join(" ");
  html += `<polygon class="area" points="${px(22)},${py(0)} ${curve} ${px(32)},${py(0)}"/>`;
  html += line("frame", left, top + 0.5, right, top + 0.5);
  html += line("frame", right + 0.5, top, right + 0.5, bottom);
  html += line("axis", left, top, left, bottom + 1);
  html += line("axis", left, bottom, right, bottom);
  html += `<polyline class="line" points="${curve}"/>`;
  html += line("marker", px(currentTemp), 14, px(currentTemp), bottom - 1);
  points.forEach(([t, p]) => {
    html += `<circle cx="${px(t)}" cy="${py(p)}" r="3.5"/>`;
  });
  html += `<text x="${(left + right) / 2}" y="161" text-anchor="middle">Temperatur in °C</text>`;
  html += `<text transform="translate(18 63) rotate(-90)" text-anchor="middle">Reglerausgang in %</text>`;
  chart.innerHTML = html;
};

drawChart();
window.addEventListener("resize", drawChart);
```
